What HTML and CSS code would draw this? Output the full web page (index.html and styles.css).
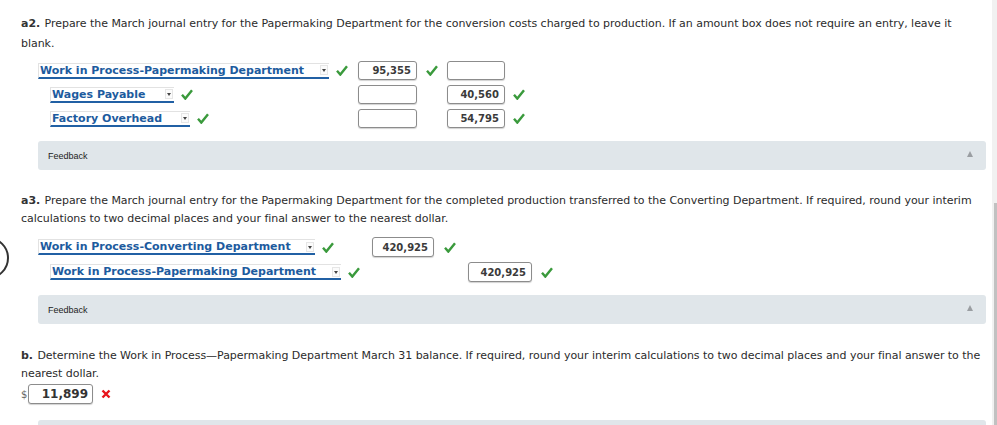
FILE: index.html
```html
<!DOCTYPE html>
<html>
<head>
<meta charset="utf-8">
<link rel="stylesheet" href="styles.css">
</head>
<body>
<div class="circle"></div>
<div class="scrollbar"><div class="thumb"></div></div>
<main class="page">
  <p class="q q-a2"><b>a2.</b> Prepare the March journal entry for the Papermaking Department for the conversion costs charged to production. If an amount box does not require an entry, leave it blank.</p>

  <div class="journal j-a2">
    <div class="row">
      <div class="acct">
        <div class="select w-wipp"><span class="label">Work in Process-Papermaking Department</span><span class="arrow"></span></div>
        <svg class="chk" viewBox="0 0 12 11"><path d="M1 5.8 L4.3 9.6 L11 1.2" /></svg>
      </div>
      <div class="amt">95,355</div>
      <div class="mark"><svg class="chk" viewBox="0 0 12 11"><path d="M1 5.8 L4.3 9.6 L11 1.2" /></svg></div>
      <div class="amt"></div>
      <div class="mark2"></div>
    </div>
    <div class="row">
      <div class="acct credit">
        <div class="select w-wages"><span class="label">Wages Payable</span><span class="arrow"></span></div>
        <svg class="chk" viewBox="0 0 12 11"><path d="M1 5.8 L4.3 9.6 L11 1.2" /></svg>
      </div>
      <div class="amt"></div>
      <div class="mark"></div>
      <div class="amt">40,560</div>
      <div class="mark2"><svg class="chk" viewBox="0 0 12 11"><path d="M1 5.8 L4.3 9.6 L11 1.2" /></svg></div>
    </div>
    <div class="row">
      <div class="acct credit">
        <div class="select w-fo"><span class="label">Factory Overhead</span><span class="arrow"></span></div>
        <svg class="chk" viewBox="0 0 12 11"><path d="M1 5.8 L4.3 9.6 L11 1.2" /></svg>
      </div>
      <div class="amt"></div>
      <div class="mark"></div>
      <div class="amt">54,795</div>
      <div class="mark2"><svg class="chk" viewBox="0 0 12 11"><path d="M1 5.8 L4.3 9.6 L11 1.2" /></svg></div>
    </div>
  </div>

  <div class="feedback fb-a2"><span>Feedback</span><span class="tri"></span></div>

  <p class="q q-a3"><b>a3.</b> Prepare the March journal entry for the Papermaking Department for the completed production transferred to the Converting Department. If required, round your interim calculations to two decimal places and your final answer to the nearest dollar.</p>

  <div class="journal j-a3">
    <div class="row">
      <div class="acct">
        <div class="select w-wipc"><span class="label">Work in Process-Converting Department</span><span class="arrow"></span></div>
        <svg class="chk" viewBox="0 0 12 11"><path d="M1 5.8 L4.3 9.6 L11 1.2" /></svg>
      </div>
      <div class="amt">420,925</div>
      <div class="mark"><svg class="chk" viewBox="0 0 12 11"><path d="M1 5.8 L4.3 9.6 L11 1.2" /></svg></div>
      <div class="blank"></div>
      <div class="mark2"></div>
    </div>
    <div class="row">
      <div class="acct credit">
        <div class="select w-wipp2"><span class="label">Work in Process-Papermaking Department</span><span class="arrow"></span></div>
        <svg class="chk" viewBox="0 0 12 11"><path d="M1 5.8 L4.3 9.6 L11 1.2" /></svg>
      </div>
      <div class="blank"></div>
      <div class="mark"></div>
      <div class="amt">420,925</div>
      <div class="mark2"><svg class="chk" viewBox="0 0 12 11"><path d="M1 5.8 L4.3 9.6 L11 1.2" /></svg></div>
    </div>
  </div>

  <div class="feedback fb-a3"><span>Feedback</span><span class="tri"></span></div>

  <p class="q q-b"><b>b.</b> Determine the Work in Process—Papermaking Department March 31 balance. If required, round your interim calculations to two decimal places and your final answer to the nearest dollar.</p>

  <div class="answer">
    <span class="dollar">$</span>
    <div class="amt big">11,899</div>
    <svg class="xmark" viewBox="0 0 10 10"><path d="M1.5 1.5 L8.5 8.5 M8.5 1.5 L1.5 8.5" /></svg>
  </div>

  <div class="feedback fb-b"></div>
</main>
</body>
</html>
```

FILE: styles.css
```css
html, body {
  margin: 0;
  padding: 0;
  background: #ffffff;
  overflow: hidden;
}

body {
  width: 997px;
  height: 425px;
  position: relative;
  font-family: "DejaVu Sans", Verdana, sans-serif;
  font-size: 11px;
  color: #2b2b2b;
}

.page {
  width: 970px;
  padding: 0 0 0 21px;
}

.q {
  margin: 0;
  line-height: 18px;
  width: 966px;
  letter-spacing: -0.04px;
}

.q b {
  font-weight: bold;
  color: #333;
  margin-right: 1px;
}

.q-a2 { padding-top: 14px; line-height: 19.5px; }
.q-a3 { padding-top: 22px; }
.q-b { padding-top: 23px; }

.journal {
  margin-left: 17px;
  display: flex;
  flex-direction: column;
}

.j-a2 { margin-top: 8px; gap: 5px; }
.j-a3 { margin-top: 9px; gap: 5px; }

.row {
  display: grid;
  align-items: center;
}

.j-a2 .row { grid-template-columns: 320px 59px 30px 58px 20px; height: 19px; }
.j-a3 .row { grid-template-columns: 334px 62px 34px 64px 20px; height: 20px; }

.acct {
  display: flex;
  align-items: center;
  gap: 7px;
}

.acct.credit { padding-left: 12px; }

.select {
  box-sizing: border-box;
  height: 16px;
  display: flex;
  align-items: center;
  justify-content: space-between;
  border-top: 1px solid #e2e2e2;
  border-left: 1px solid #e2e2e2;
  border-bottom: 2px solid #2160a4;
  padding: 0 1px 0 1px;
}

.label {
  font-weight: bold;
  font-size: 11px;
  color: #1d5b9e;
  white-space: nowrap;
  line-height: 13px;
}

.arrow {
  width: 8px;
  height: 10px;
  background: #fbfbfb;
  border: 1px solid #e6e6e6;
  box-sizing: border-box;
  position: relative;
}

.arrow::after {
  content: "";
  position: absolute;
  left: 1px;
  top: 3px;
  border-left: 2.5px solid transparent;
  border-right: 2.5px solid transparent;
  border-top: 3px solid #444;
}

.w-wipp { width: 291px; }
.w-wages { width: 124px; }
.w-fo { width: 140px; }
.w-wipc { width: 277px; }
.w-wipp2 { width: 291px; }

.chk {
  width: 12px;
  height: 11px;
  flex: none;
  display: block;
}

.chk path {
  fill: none;
  stroke: #3a9a3c;
  stroke-width: 2.4;
  stroke-linecap: butt;
  stroke-linejoin: miter;
}

.mark { padding-left: 9px; }
.j-a3 .mark { padding-left: 10px; }
.mark2 { padding-left: 8px; }
.j-a3 .mark2 { padding-left: 9px; }

.amt {
  box-sizing: border-box;
  height: 100%;
  border: 1px solid #8c8c8c;
  border-radius: 3px;
  box-shadow: 0 1px 1px rgba(0, 0, 0, 0.18);
  background: #fff;
  font-size: 10px;
  font-weight: bold;
  color: #3a3a3a;
  text-align: right;
  padding-right: 5px;
  display: flex;
  align-items: center;
  justify-content: flex-end;
}

.feedback {
  margin-left: 17px;
  width: 948px;
  height: 29px;
  box-sizing: border-box;
  background: #e0e6ea;
  border-radius: 3px;
  display: flex;
  align-items: center;
  justify-content: space-between;
  padding: 0 13px 0 10px;
  font-family: "Liberation Sans", Arial, sans-serif;
  font-size: 9px;
  color: #222;
}

.fb-a2 { margin-top: 13px; }
.fb-a3 { margin-top: 13px; }
.fb-b { margin-top: 16px; }

.tri {
  width: 0;
  height: 0;
  border-left: 3.5px solid transparent;
  border-right: 3.5px solid transparent;
  border-bottom: 6px solid #9a9ea2;
  margin-top: -3px;
}

.answer {
  margin-top: 1px;
  display: flex;
  align-items: center;
  height: 20px;
}

.dollar {
  width: 7px;
  color: #666;
  font-size: 10px;
}

.amt.big {
  width: 65px;
  height: 20px;
  font-size: 12px;
  padding-right: 4px;
  color: #333;
}

.xmark {
  width: 10px;
  height: 10px;
  margin-left: 8px;
}

.xmark path {
  stroke: #e8141b;
  stroke-width: 2.4;
  fill: none;
}

.circle {
  position: absolute;
  left: -33px;
  top: 237px;
  width: 38px;
  height: 38px;
  border: 2px solid #333;
  border-radius: 50%;
}

.scrollbar {
  position: absolute;
  right: 0;
  top: 0;
  width: 5px;
  height: 425px;
  background: #f1f1f1;
}

.thumb {
  position: absolute;
  right: 0;
  top: 203px;
  width: 3px;
  height: 222px;
  background: #c1c1c1;
}
```
